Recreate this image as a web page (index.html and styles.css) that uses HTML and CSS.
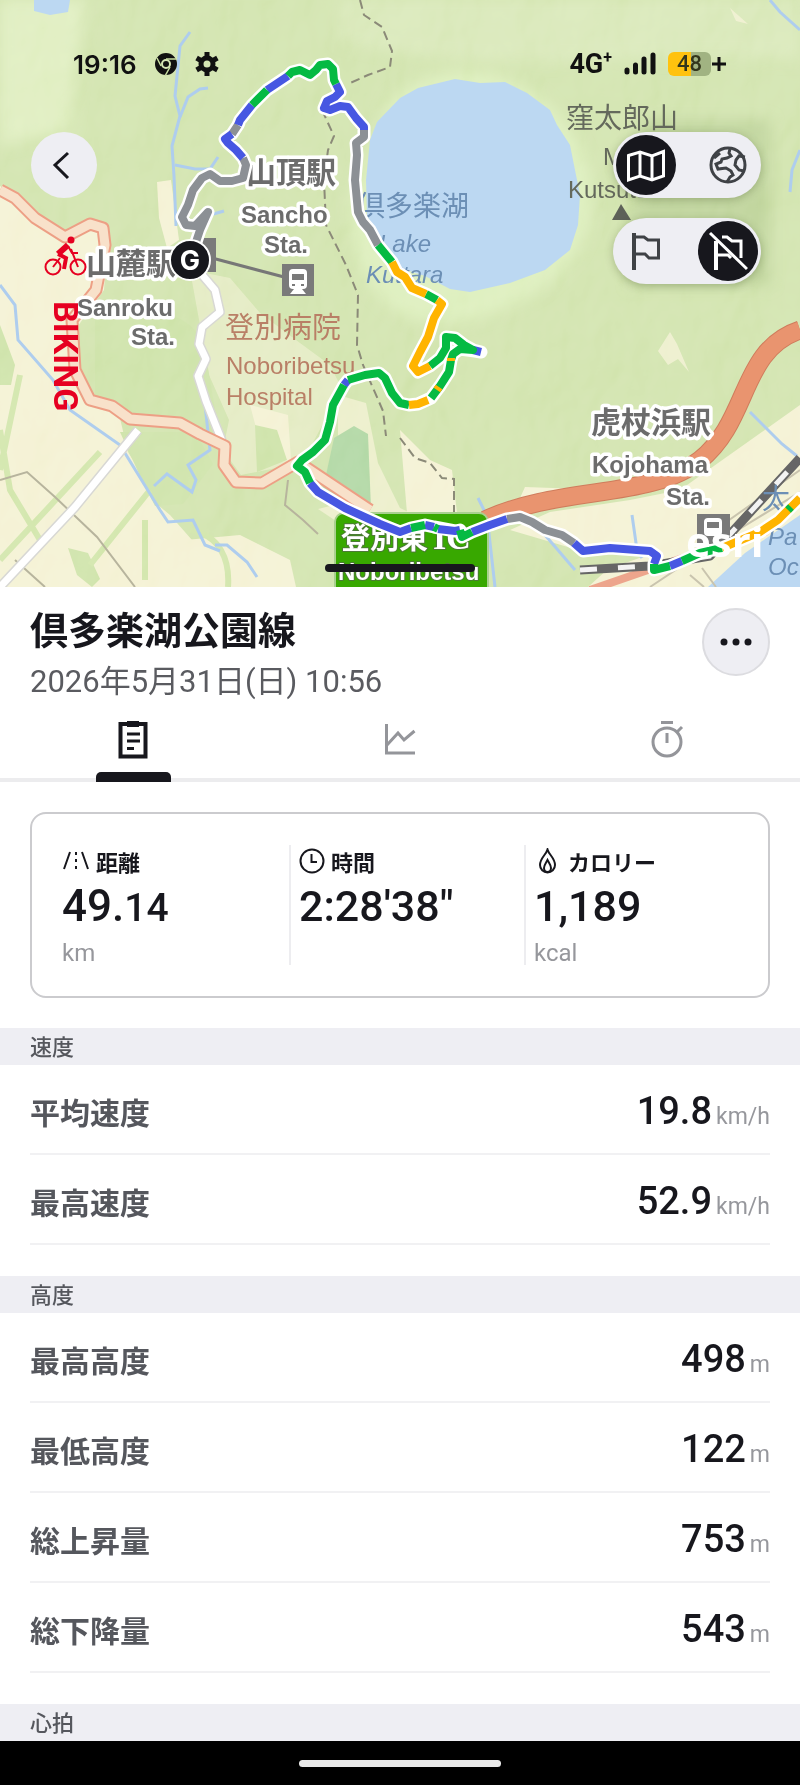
FILE: index.html
```html
<!DOCTYPE html>
<html lang="ja">

<head>
    <meta charset="UTF-8">
    <meta name="viewport" content="width=device-width, initial-scale=1.0">
    <title>倶多楽湖公園線</title>
    <link rel="stylesheet" href="styles.css">
</head>

<body>
    <div class="map">
        <svg class="map-canvas" viewBox="0 0 800 587" preserveAspectRatio="xMidYMid slice" aria-label="ルートマップ">
            <defs>
                <filter id="soft" x="-20%" y="-20%" width="140%" height="140%">
                    <feGaussianBlur stdDeviation="7" />
                </filter>
                <filter id="relief" x="0" y="0" width="100%" height="100%">
                    <feTurbulence type="fractalNoise" baseFrequency="0.012 0.008" numOctaves="4" seed="8" />
                    <feDiffuseLighting surfaceScale="16" lighting-color="#ffffff">
                        <feDistantLight azimuth="225" elevation="60" />
                    </feDiffuseLighting>
                </filter>
            </defs>

            <!-- land -->
            <rect width="800" height="587" fill="#cde1a6" />
            <g filter="url(#soft)">
                <path d="M0 0H85L70 130 0 145z" fill="#dcecb9" />
                <path d="M390 100C450 50 530 70 570 130S600 270 500 310 350 290 350 200z" fill="#d9edb6" />
                <path d="M340 0H800V60C600 50 500 80 340 40z" fill="#d5e6b2" />
                <path d="M640 120h130v90h-130zM630 205h140v80h-140z" fill="#b8cf91" />
            </g>

            <!-- fields -->
            <g fill="#f3f0cf">
                <path d="M0 186C30 205 45 240 70 237L100 222 108 240 104 290 75 330 82 395 118 410 128 452 142 475 152 500 170 515 192 540 232 545 250 587H0z" />
                <path d="M157 182l14-2 8 60-12 8-8-30z" />
                <path d="M190 270l40 8 30 35 40 30 30 22 10 20-15 35-16 30-18 15-50 10-18-25 6-30-20-45z" opacity=".55" />
                <path d="M250 405l38 10 3 45-25 5z" />
                <path d="M338 395l28 8 12 60 22 45 30 14-62-5-20 12-30-20 20-5z" opacity=".75" />
                <path d="M185 540l55-5 50 25 6 27H170z" />
                <path d="M400 430l30 30 22 10 5 43h-50zM525 487l55 2-40 17-25 3z" />
                <path d="M510 530l40-18 80-12 50-10 120-85V587H588l20-18 40-14-70-5z" />
                <path d="M670 332l7 12 12 28-11-13-10 6-10-14z" opacity=".8" />
                <path d="M730 8l18 16-12-3z" opacity=".8" />
            </g>
            <g fill="#c9e0a1">
                <path d="M95 320C140 300 195 310 205 350L220 440 150 420 95 400z" />
                <path d="M120 432l75 0 18 32-30 40-28 2-15-30z" />
                <path d="M0 325l15 40-4 20-11 0z" />
                <path d="M255 425l22 5 10 30-30 12z" />
                <path d="M68 548l20 5 12 26-8 8-15-12z" />
            </g>
            <path d="M334 438l20-12 14 8 3 75-30 4-20-15z" fill="#a9d39b" />
            <g fill="none" stroke="#cde3a3" stroke-width="6">
                <path d="M20 375L0 470M0 430l10 60 30 50M100 452L0 560M150 490l-60 75M145 520l0 60M190 530c30 5 40 30 38 57" />
            </g>

            <rect width="800" height="587" filter="url(#relief)" class="relief" />

            <!-- water -->
            <g fill="#bcd8f2">
                <path d="M34 0h36l-2 12-18 3-16-4z" />
                <path d="M400 98L418 88 455 79 480 83 505 82 527 93 550 110 557 125 570 145 575 170 580 195 578 225 570 250 545 270 510 283 470 292 450 289 425 276 400 268 380 245 367 215 366 180 370 140 377 122z" />
                <path d="M708 587L745 553 800 515V587z" />
            </g>
            <g fill="none" stroke="#aecdee" stroke-width="3">
                <path d="M190 32l-10 14-5 50 5 20-8 30 2 30 2 50" />
                <path d="M180 117l8-20 12-8 8-1M175 165l20 4 15 0 8-12M210 215l14-4" />
                <path d="M0 285l15 20 3 35 35 40 17 30 50 35 40 65 8 12 25-2 12 25 15 6" />
                <path d="M205 405l5 45-22 15 8 15-4 12-25-18-13 12M800 30l-20-18-10-12M800 150l-8 20-2 22" />
                <path d="M750 412l32 32 15 12M632 515l5 35 5 8M545 535l30 35M478 498l9 18 8 71M215 545l12 0 20 17 10 15" />
            </g>

            <!-- tracks and boundaries -->
            <g fill="none" stroke="#8b8a78" stroke-width="2" stroke-dasharray="9 5">
                <path d="M360 0l4 15 18 12 10 24-2 16-22 8-20 9" />
                <path d="M322 110l12 26-6 14-4 30 2 45 20 40 12 30-1 50 6 20 20 46 3 25M400 438l15 20 15 5 12 15 12 1 0 35" />
            </g>
            <path d="M0 480l27-8 28 25 42 40 38 50M288 480l-3 25 18 15 15 14M15 560l30 27" fill="none" stroke="#b7b49d" stroke-width="2" />

            <!-- roads -->
            <g fill="none" stroke-linejoin="round">
                <path d="M0 587L75 507 138 430" stroke="#d8d8d4" stroke-width="10" />
                <path d="M0 587L75 507 138 430" stroke="#fff" stroke-width="7" />
                <path d="M198 270l17 20 5 22-18 15-3 17 7 15-8 17 8 25 16 40" stroke="#d8d8d4" stroke-width="10" />
                <path d="M198 270l17 20 5 22-18 15-3 17 7 15-8 17 8 25 16 40" stroke="#fff" stroke-width="7" />
                <path d="M0 190L15 198 35 218 65 237 90 224 103 228 105 245 96 290 72 320 75 370 90 400 112 406 130 419 180 423 200 434 225 446 224 465 236 482 262 483 298 462 370 510" stroke="#ed9f85" stroke-width="13" />
                <path d="M0 190L15 198 35 218 65 237 90 224 103 228 105 245 96 290 72 320 75 370 90 400 112 406 130 419 180 423 200 434 225 446 224 465 236 482 262 483 298 462 370 510" stroke="#f8e1ca" stroke-width="9" />
                <path d="M485 520C560 485 650 500 700 460S740 350 800 330" stroke="#cf7c5c" stroke-width="19" />
                <path d="M485 520C560 485 650 500 700 460S740 350 800 330" stroke="#e9946f" stroke-width="17" />
                <path d="M590 590L700 552 765 532 800 500" stroke="#eda58c" stroke-width="8" />
                <path d="M715 530L800 470M650 587l60-40 90-55M690 575l14 12M702 568l14 19" stroke="#c9c4ae" stroke-width="2" />
                <path d="M580 570l70-4 60-10L800 458" stroke="#666" stroke-width="9" />
                <path d="M580 570l70-4 60-10L800 458" stroke="#f3f3f3" stroke-width="5" stroke-dasharray="17 21" />
                <path d="M212 258l72 19" stroke="#777" stroke-width="3" />
            </g>

            <!-- station marks -->
            <path d="M196 238h20v34h-20zM282 264h32v32h-32zM697 514h33v30h-33z" fill="#7a7a7a" />
            <g fill="#fff">
                <rect x="289" y="269" width="18" height="20" rx="4" />
                <path d="M290 294l4-5h8l4 5z" />
                <rect x="704" y="518" width="18" height="18" rx="4" />
            </g>
            <g fill="#7a7a7a">
                <path d="M292 274h12v6h-12zM292 284h3v2h-3zM301 284h3v2h-3zM707 522h12v6h-12z" />
                <path d="M621 204l10 16h-19z" fill="#5d6158" />
            </g>

            <!-- labels -->
            <g class="label station">
                <text x="246" y="183" class="kanji">山頂駅</text>
                <text x="241" y="223">Sancho</text>
                <text x="264" y="253">Sta.</text>
                <text x="86" y="274" class="kanji">山麓駅</text>
                <text x="77" y="316">Sanroku</text>
                <text x="131" y="345">Sta.</text>
                <text x="591" y="433" class="kanji">虎杖浜駅</text>
                <text x="592" y="473">Kojohama</text>
                <text x="666" y="505">Sta.</text>
            </g>
            <g class="label place">
                <text x="566" y="128" class="kanji">窪太郎山</text>
                <text x="603" y="165">Mt.</text>
                <text x="568" y="198">Kutsutaro</text>
            </g>
            <g class="label hospital">
                <text x="225" y="338" class="kanji">登別病院</text>
                <text x="226" y="374">Noboribetsu</text>
                <text x="226" y="405">Hospital</text>
            </g>
            <g class="label water">
                <text x="357" y="216" class="kanji">倶多楽湖</text>
                <text x="379" y="252">Lake</text>
                <text x="366" y="283">Kuttara</text>
                <text x="762" y="509" class="kanji">太</text>
                <text x="768" y="545">Pa</text>
                <text x="768" y="575">Oc</text>
            </g>

            <!-- interchange sign -->
            <rect x="335" y="513" width="153" height="90" rx="9" fill="#38a800" stroke="#a9d08f" stroke-width="2" />
            <g class="label sign">
                <text x="341" y="549" class="kanji">登別東</text>
                <text x="433" y="549" class="latin">IC</text>
                <text x="338" y="580">Noboribetsu</text>
            </g>

            <!-- recorded route, white casing first -->
            <g class="route">
                <path class="casing" d="M190 260L200 230 208 212 195 226 186 225 182 217 188 205 193 190 202 178 210 174 220 181 232 181 243 178 246 165 243 158 236 150 228 143 225 139 232 134 238 125 240 120 252 105 267 90 288 76 292 72 300 70 310 75 316 70 320 65 328 64 333 69 334 80 336 84 340 92 335 97 327 101 324 108 330 110 340 106 348 107 356 118 364 127 364 137 356 143 357 155 355 180 358 212 363 222 370 230 378 245 392 262 397 272 405 277 412 288 426 294 437 300 442 304 434 318 428 337 420 352 413 366 418 372 430 366 440 358 446 348 446 337 455 338 464 345 473 350 481 352 475 351 460 349 453 354 451 360 449 372 440 386 431 398 418 404 409 405 400 403 392 393 385 378 379 373 365 375 348 380 344 385 333 405 330 422 325 440 313 452 302 460 297 466 305 472 310 483 318 492 345 508 380 524 400 532 411 528 425 525 434 527 455 531 460 530 462 537 472 532 490 525 507 519 520 517 532 522 545 530 562 535 574 543 583 551 610 548 650 551 657 556 654 564 654 570 670 566 682 561 700 553 722 548 760 532 778 520 790 508 800 498" />
                <path class="gray" d="M190 260L200 230 208 212 195 226 186 225 182 217 188 205 193 190 202 178 210 174 220 181 232 181 243 178 246 165 243 158M232 134L238 125M364 130L364 137 356 143 357 155 355 180 358 212 363 222 370 230 378 245M507 519L520 517 532 522 545 530 562 535 574 543" />
                <path class="blue" d="M243 158L236 150 228 143 225 139 232 134M238 125L240 120 252 105M267 90L288 76M336 84L340 92 335 97 327 101 324 108 330 110 340 106 348 107 356 118 364 127 364 130M473 350L481 352M348 380L344 385M310 483L318 492 345 508 380 524 400 532 411 528M425 525L434 527M438 529L455 531 460 530M472 532L490 525 507 519M574 543L583 551 610 548 650 551 657 556 654 564M670 566L682 561" />
                <path class="green" d="M252 105L267 90M288 76L292 72 300 70 310 75 316 70 320 65 328 64 333 69 334 80 336 84M378 245L392 262M426 294L437 300M430 366L440 358 446 348 446 337 455 338 464 345 473 350 460 349 453 354 451 360 449 372 440 386 431 398M409 405L400 403 392 393 385 378 379 373 365 375 348 380M344 385L333 405 330 422 325 440 313 452 302 460 297 466 305 472 310 483M411 528L425 525M434 527L438 529M460 530L462 537 472 532M654 564L654 570 670 566M682 561L700 553 722 548" />
                <path class="yellow" d="M392 262L397 272 405 277 412 288 426 294M437 300L442 304 434 318 428 337 420 352 413 366 418 372 430 366M451 358L451 361M439 387L437 390M428 400L418 404 409 405M722 548L760 532 778 520 790 508 800 498" />
                <path class="green" d="M788 510L791 507" />
            </g>

            <text x="686" y="557" class="esri">esri</text>

            <circle cx="190" cy="260" r="20" fill="#17171d" stroke="#fff" stroke-width="2" />
            <text x="190" y="270" class="goal">G</text>
        </svg>

        <div class="status-bar">
            <div class="status-group">
                <span class="clock">19:16</span>
                <svg width="24" height="24" viewBox="0 0 24 24" aria-hidden="true">
                    <circle cx="12" cy="12" r="8" fill="none" stroke="#111" stroke-width="6" />
                    <circle cx="12" cy="12" r="3" fill="#111" />
                    <path d="M12 7h10M7 14L3 6M16 15l-5 9" fill="none" stroke="#c9dfa2" stroke-width="1.5" />
                </svg>
                <svg width="24" height="24" viewBox="0 0 24 24" aria-hidden="true">
                    <circle cx="12" cy="12" r="6" fill="none" stroke="#111" stroke-width="5" />
                    <path d="M12 0v5M12 19v5M1.600 6l4.300 2.500M18 15.500l4.400 2.500M1.600 18l4.300-2.500M18 8.500L22.400 6" stroke="#111" stroke-width="5" />
                </svg>
            </div>
            <div class="status-group right">
                <span class="network">4G<sup>+</sup></span>
                <svg width="32" height="24" viewBox="0 0 32 24" aria-hidden="true">
                    <path d="M3 18v2M11.500 13v7M20 7v13M29 3v17" stroke="#111" stroke-width="5" stroke-linecap="round" />
                </svg>
                <span class="battery">48</span>
                <svg width="16" height="16" viewBox="0 0 16 16" aria-hidden="true">
                    <path d="M8 1v14M1 8h14" stroke="#111" stroke-width="3" />
                </svg>
            </div>
        </div>

        <div class="map-controls">
            <button class="back" aria-label="戻る">
                <svg width="40" height="40" viewBox="0 0 40 40"><path d="M24 8L11 20 24 33" fill="none" stroke="#17171d" stroke-width="3" /></svg>
            </button>
            <div class="switches">
                <div class="switch">
                    <button class="on" aria-label="地図">
                        <svg width="40" height="40" viewBox="0 0 40 40" fill="none" stroke="#fff" stroke-width="3">
                            <path d="M2.500 10.500L14 7l12 4 11.500-4.500V31L26 35l-12-4-11.500 4z" />
                            <path d="M14 7v24M26 11v24" />
                        </svg>
                    </button>
                    <button aria-label="衛星写真">
                        <svg width="40" height="40" viewBox="0 0 40 40" fill="none" stroke="#3f4246" stroke-width="3">
                            <circle cx="20" cy="20" r="17" />
                            <path d="M22 4l-1 4 2 3-4 2-5 1-1 3-5 2 2 5 8-1 5 3 2 4-3 2-3 5M6 13l6-5M37 12l-6-1-3 4-1 5 4 5 5 1" />
                        </svg>
                    </button>
                </div>
                <div class="switch">
                    <button aria-label="旗を表示">
                        <svg width="40" height="40" viewBox="0 0 40 40" fill="none" stroke="#3f4246">
                            <path d="M8 2v37" stroke-width="4" />
                            <path d="M10 6h8l4 3h10.500v18H23l-4-4h-9" stroke-width="3" />
                        </svg>
                    </button>
                    <button class="on" aria-label="旗を隠す">
                        <svg width="40" height="40" viewBox="0 0 40 40" fill="none" stroke="#fff">
                            <path d="M8 10v29" stroke-width="4" />
                            <path d="M14 6h5l5 4h9v17M10 24h10l3 3M2 2l37 36" stroke-width="3" />
                        </svg>
                    </button>
                </div>
            </div>
        </div>

        <div class="activity">
            <svg width="44" height="42" viewBox="0 0 44 42" fill="none" stroke="#e60021" aria-hidden="true">
                <circle cx="9" cy="31" r="7.500" stroke-width="2" />
                <circle cx="34" cy="31" r="7.500" stroke-width="2" />
                <circle cx="27" cy="4" r="3.500" fill="#e60021" stroke="none" />
                <path d="M24 9L14 18" stroke-width="6" />
                <path d="M14 18l8 4-2 11" stroke-width="4" />
                <path d="M24 10l4 7h6M9 31l7-9M27 13l7 18" stroke-width="2" />
            </svg>
            <span>BIKING</span>
        </div>

        <div class="drag-bar"></div>
    </div>

    <header class="heading">
        <div>
            <h1>倶多楽湖公園線</h1>
            <p>2026年5月31日(日) 10:56</p>
        </div>
        <button class="more" aria-label="メニュー">
            <svg width="32" height="8" viewBox="0 0 32 8" fill="#17171d">
                <circle cx="4" cy="4" r="3.500" />
                <circle cx="16" cy="4" r="3.500" />
                <circle cx="28" cy="4" r="3.500" />
            </svg>
        </button>
    </header>

    <nav class="tabs">
        <button class="active" aria-label="詳細">
            <svg width="40" height="40" viewBox="0 0 40 40" fill="none" stroke="#17171d">
                <path d="M7.500 5h25v32.500h-25z" stroke-width="4" />
                <path d="M14 5h12" stroke-width="6" />
                <path d="M14 15h13M14 22h13M14 29.500h7" stroke-width="3" />
            </svg>
        </button>
        <button aria-label="グラフ">
            <svg width="40" height="40" viewBox="0 0 40 40" fill="none" stroke="#94959a" stroke-width="3">
                <path d="M6.500 5v29H35M7 26L18 14l6 7L34.500 12" />
            </svg>
        </button>
        <button aria-label="ラップ">
            <svg width="40" height="40" viewBox="0 0 40 40" fill="none" stroke="#94959a" stroke-width="3">
                <circle cx="20" cy="23" r="14" />
                <path d="M14 3.500h12M20 14v10M30 13l5-5" />
            </svg>
        </button>
    </nav>

    <main>
        <section class="summary">
            <div class="stat">
                <h2>
                    <svg width="28" height="24" viewBox="0 0 28 24" fill="none" stroke="#17171d" stroke-width="2">
                        <path d="M8 3L2 20M20 3l6 17" />
                        <path d="M14 3v17" stroke-dasharray="3 4" />
                    </svg>
                    距離
                </h2>
                <p class="value distance">49.<small>14</small></p>
                <p class="unit">km</p>
            </div>
            <div class="stat">
                <h2>
                    <svg width="26" height="26" viewBox="0 0 26 26" fill="none" stroke="#17171d" stroke-width="2">
                        <circle cx="13" cy="13" r="11.500" />
                        <path d="M12.500 6v8H18" />
                    </svg>
                    時間
                </h2>
                <p class="value">2:28'38"</p>
            </div>
            <div class="stat">
                <h2>
                    <svg width="28" height="26" viewBox="0 0 28 26" fill="none" stroke="#17171d" stroke-width="2">
                        <path d="M13.500 1.500C12 7 6 10 6 17a7.500 7.500 0 0 0 15 0C21 10 15 7 13.500 1.500z" />
                        <path d="M13.500 12C12 15 10 17 10 20a3.500 4 0 0 0 7 0C17 17 15 15 13.500 12z" />
                    </svg>
                    カロリー
                </h2>
                <p class="value">1,189</p>
                <p class="unit">kcal</p>
            </div>
        </section>

        <section class="group">
            <h2>速度</h2>
            <dl>
                <div class="row"><dt>平均速度</dt><dd>19.8<span>km/h</span></dd></div>
                <div class="row"><dt>最高速度</dt><dd>52.9<span>km/h</span></dd></div>
            </dl>
        </section>

        <section class="group">
            <h2>高度</h2>
            <dl>
                <div class="row"><dt>最高高度</dt><dd>498<span>m</span></dd></div>
                <div class="row"><dt>最低高度</dt><dd>122<span>m</span></dd></div>
                <div class="row"><dt>総上昇量</dt><dd>753<span>m</span></dd></div>
                <div class="row"><dt>総下降量</dt><dd>543<span>m</span></dd></div>
            </dl>
        </section>

        <section class="group">
            <h2>心拍</h2>
        </section>
    </main>

    <footer class="system-nav"><span></span></footer>
</body>

</html>
```
FILE: styles.css
```css
* {
  box-sizing: border-box;
}

html, body {
  margin: 0;
  padding: 0;
}

body {
  background-color: #fff;
  color: #17171d;
  font-family: Roboto, "Noto Sans CJK JP", sans-serif;
}

h1, h2, p, dl, dd {
  margin: 0;
}

button {
  display: flex;
  align-items: center;
  justify-content: center;
  padding: 0;
  border: none;
  background: none;
  cursor: pointer;
}

svg {
  display: block;
  flex: none;
}

/* Map */
.map {
  position: relative;
  overflow: hidden;
}

.map-canvas {
  width: 100%;
  height: auto;
}

.relief {
  mix-blend-mode: soft-light;
  opacity: 0.4;
}

.label {
  font-family: "Liberation Sans", "Noto Sans CJK JP", sans-serif;
  font-size: 24px;
  paint-order: stroke;
  stroke-linejoin: round;
}

.label .kanji {
  font-size: 29px;
}

.station {
  fill: #6c6c6c;
  stroke: #fff;
  stroke-width: 7px;
  font-weight: bold;
}

.station .kanji {
  font-size: 30px;
}

.place {
  fill: #64695c;
}

.place .kanji {
  font-size: 28px;
}

.hospital {
  fill: #b97f66;
}

.water {
  fill: #6c8fb5;
  font-style: italic;
}

.water .kanji {
  font-size: 28px;
  font-style: normal;
}

.sign {
  fill: #fff;
  stroke: #4c7a35;
  stroke-width: 2px;
  font-weight: bold;
}

.sign .latin {
  font-family: "Liberation Serif", serif;
  font-size: 34px;
}

.esri {
  fill: #fff;
  font-family: "Open Sans", sans-serif;
  font-size: 42px;
  font-weight: 700;
}

.goal {
  fill: #fff;
  font-family: Inter, sans-serif;
  font-size: 27px;
  font-weight: 700;
  text-anchor: middle;
}

/* Route colours by pace */
.route path {
  fill: none;
  stroke-width: 8px;
  stroke-linejoin: round;
}

.route .casing {
  stroke: #fff;
  stroke-width: 13px;
  stroke-linecap: round;
}

.gray { stroke: #8c9095; }
.blue { stroke: #4757e2; }
.green { stroke: #05ba43; }
.yellow { stroke: #ffb400; }

/* Status bar */
.status-bar {
  position: absolute;
  top: 48px;
  left: 0;
  right: 0;
  display: flex;
  justify-content: space-between;
  height: 32px;
  padding: 0 73px;
  color: #111;
}

.status-group {
  display: flex;
  align-items: center;
  gap: 17px;
}

.status-group.right {
  gap: 12px;
}

.clock {
  font-family: Inter, sans-serif;
  font-size: 26px;
  font-weight: 600;
}

.network {
  font-size: 27px;
  font-weight: 700;
}

.network sup {
  font-size: 16px;
  line-height: 0;
}

.battery {
  width: 43px;
  margin-right: -12px;
  border-radius: 6px;
  background: linear-gradient(to right, #ffc20e 54%, #a1b382 54%);
  color: #33361c;
  font-size: 22px;
  font-weight: 500;
  line-height: 24px;
  text-align: center;
}

/* Buttons over the map */
.map-controls {
  position: absolute;
  top: 132px;
  left: 31px;
  right: 39px;
  display: flex;
  align-items: flex-start;
  justify-content: space-between;
}

.back {
  width: 66px;
  height: 66px;
  border-radius: 50%;
  background-color: #eeeef3;
}

.switches {
  display: grid;
  gap: 20px;
}

.switch {
  display: flex;
  justify-content: space-between;
  width: 148px;
  padding: 3px;
  border-radius: 33px;
  background-color: #eeeef3;
  box-shadow: 0 2px 8px rgba(60, 80, 30, 0.3);
}

.switch button {
  width: 60px;
  height: 60px;
  border-radius: 50%;
}

.switch .on {
  background-color: #17171d;
}

.activity {
  position: absolute;
  top: 236px;
  left: 44px;
  display: grid;
  justify-items: center;
  gap: 23px;
  color: #e60021;
  font-size: 34px;
  font-weight: 700;
  line-height: 40px;
}

.activity span {
  writing-mode: vertical-rl;
}

.drag-bar {
  position: absolute;
  bottom: 15px;
  left: 50%;
  width: 150px;
  height: 8px;
  margin-left: -75px;
  border-radius: 4px;
  background-color: #17171d;
}

/* Title */
.heading {
  display: flex;
  justify-content: space-between;
  padding: 16px 30px 0;
}

.heading h1 {
  font-size: 38px;
  font-weight: 700;
  line-height: 56px;
}

.heading p {
  color: #5a5b60;
  font-size: 31px;
  line-height: 46px;
}

.more {
  width: 68px;
  height: 68px;
  margin-top: 5px;
  border: 2px solid #dcdce0;
  border-radius: 50%;
  background-color: #eeeef3;
}

/* Tabs */
.tabs {
  display: grid;
  grid-template-columns: repeat(3, 1fr);
  box-shadow: inset 0 -4px #ececee;
}

.tabs button {
  flex-direction: column;
  justify-content: space-between;
  height: 77px;
  padding-top: 14px;
}

.tabs .active::after {
  content: "";
  width: 75px;
  height: 10px;
  border-radius: 5px 5px 0 0;
  background-color: #17171d;
}

/* Summary card */
.summary {
  display: grid;
  grid-template-columns: repeat(3, 1fr);
  margin: 30px;
  padding: 31px 9px 31px 22px;
  border: 2px solid #cbcbce;
  border-radius: 16px;
}

.stat {
  height: 120px;
  padding-left: 8px;
}

.stat + .stat {
  border-left: 2px solid #ededf0;
}

.stat h2 {
  display: flex;
  align-items: center;
  gap: 6px;
  height: 31px;
  font-size: 22px;
  font-weight: 700;
}

.value {
  font-size: 43px;
  font-weight: 500;
  line-height: 60px;
}

.distance {
  font-size: 44px;
}

.value small {
  font-size: 39px;
  line-height: 1;
}

.unit {
  color: #96979c;
  font-size: 24px;
  line-height: 34px;
}

/* Detail rows */
.group h2 {
  padding: 3px 30px 0;
  background-color: #eeeef3;
  color: #55575d;
  font-size: 22px;
  font-weight: 500;
  line-height: 34px;
}

.group dl {
  padding: 0 30px 31px;
}

.row {
  display: flex;
  align-items: center;
  justify-content: space-between;
  height: 90px;
  padding-top: 4px;
  border-bottom: 2px solid #f1f1f3;
}

.row dt {
  color: #55575d;
  font-size: 30px;
  font-weight: 700;
}

.row dd {
  font-size: 38px;
  font-weight: 500;
}

.row span {
  margin-left: 4px;
  color: #96979c;
  font-size: 23px;
  font-weight: 400;
}

.system-nav {
  display: flex;
  align-items: center;
  justify-content: center;
  height: 44px;
  background-color: #000;
}

.system-nav span {
  width: 202px;
  height: 7px;
  border-radius: 4px;
  background-color: #eaeaea;
}
```
